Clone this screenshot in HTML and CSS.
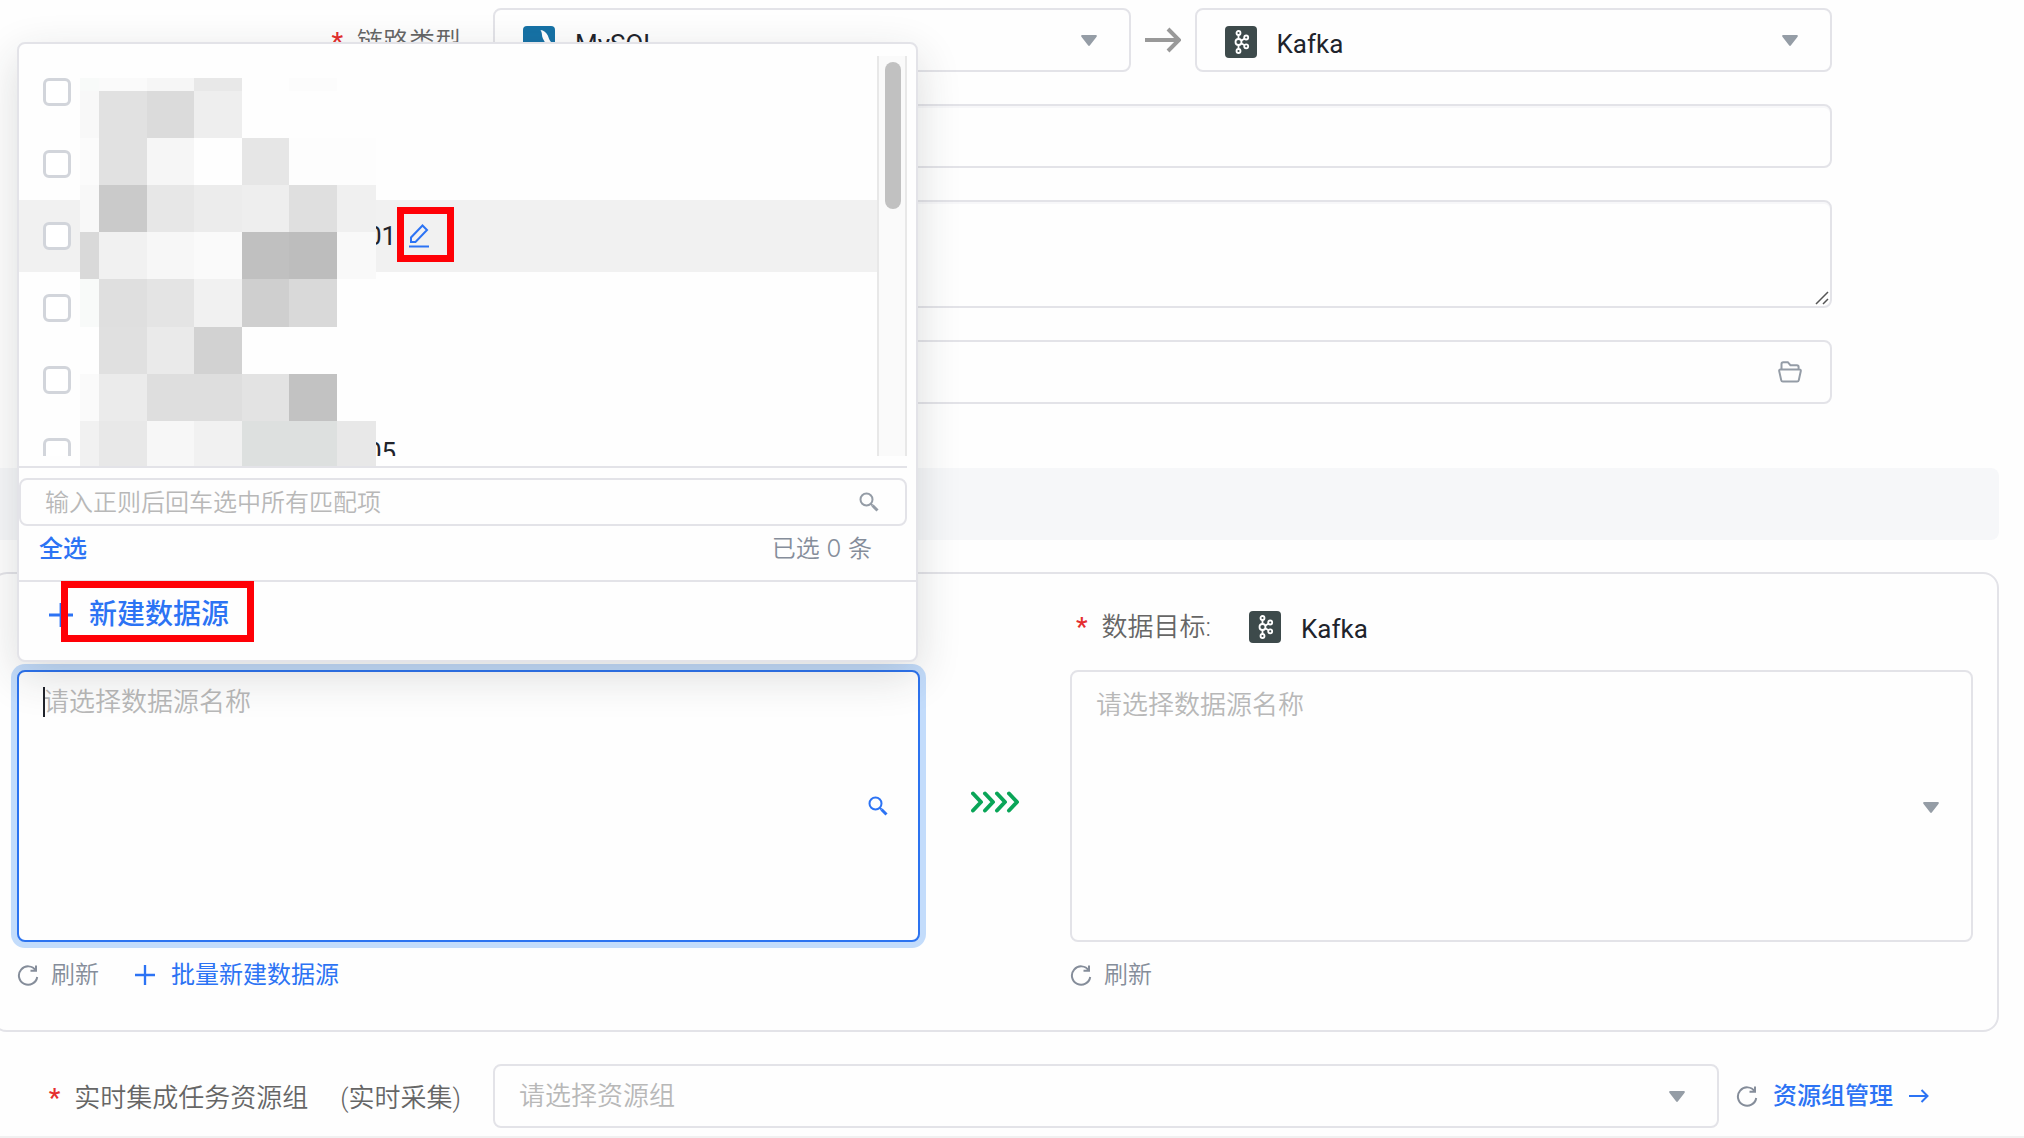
FILE: index.html
```html
<!DOCTYPE html>
<html lang="zh-CN">
<head>
<meta charset="utf-8">
<meta name="viewport" content="width=device-width, initial-scale=1">
<title>新建集成任务</title>
<link rel="stylesheet" href="styles.css">
</head>
<body>
<svg class="sprite" aria-hidden="true">
  <symbol id="caret" viewBox="0 0 16 11"><path d="M1.2 0h13.6c.9 0 1.4 1 .8 1.700L9 10.300a1.300 1.300 0 0 1-2 0L.4 1.700C-.2 1 .3 0 1.200 0z" fill="currentColor"/></symbol>
  <symbol id="kafka" viewBox="0 0 32 32">
    <rect width="32" height="32" rx="4" fill="#3d4a4b"/>
    <g fill="none" stroke="#fff" stroke-width="1.800">
      <path d="M13.500 9v4M13.500 19v4M16.500 14.500l2.800-1.800M16.500 17.500l2.800 1.500"/>
      <circle cx="13.500" cy="7" r="2"/><circle cx="13.500" cy="16" r="3"/><circle cx="13.500" cy="25" r="2"/>
      <circle cx="21.200" cy="11.500" r="2"/><circle cx="21.200" cy="20.300" r="2"/>
    </g>
  </symbol>
  <symbol id="mysql" viewBox="0 0 32 32">
    <rect width="32" height="32" rx="4" fill="#1672a6"/>
    <path d="M17.500 4c3 .3 6 2.500 7.300 5.500 1 2.400 1.500 4.500 3.200 6.500-1.500 0-3-.2-4 .5 1 2 2.500 3.500 3.500 6-3-1.500-4.500-4-6-7-1-2-2.500-4-2.500-6.500C18.800 7 18.500 5.500 17.500 4z" fill="#fff"/>
  </symbol>
  <symbol id="search" viewBox="0 0 20 20"><circle cx="7.500" cy="7.500" r="6" fill="none" stroke="currentColor" stroke-width="2"/><path d="M12 12l1.500 1.500" stroke="currentColor" stroke-width="2"/><path d="M13.500 13.500l5 5" stroke="currentColor" stroke-width="3"/></symbol>
  <symbol id="refresh" viewBox="0 0 22 22"><path d="M18.800 6.500A9.200 9.200 0 1 0 20.200 13M19 1.500v5.300h-5.500" fill="none" stroke="currentColor" stroke-width="2"/></symbol>
  <symbol id="plus" viewBox="0 0 24 24"><path d="M12 0v24M0 12h24" stroke="currentColor" stroke-width="2.800"/></symbol>
</svg>

<main class="page">
  <form class="form">
    <div class="row">
      <label class="label" for="src-type"><span class="star">*</span>链路类型</label>
      <div class="links">
        <div class="pick">
          <svg class="logo"><use href="#mysql"/></svg>
          <select id="src-type" class="pick-select"><option>MySQL</option></select>
          <svg class="caret"><use href="#caret"/></svg>
        </div>
        <svg class="flow" viewBox="0 0 36 26" aria-hidden="true"><path d="M0 13h33M23 2l11 11-11 11" fill="none" stroke="#999" stroke-width="4"/></svg>
        <div class="pick">
          <svg class="logo"><use href="#kafka"/></svg>
          <select class="pick-select" aria-label="目标类型"><option>Kafka</option></select>
          <svg class="caret"><use href="#caret"/></svg>
        </div>
      </div>
    </div>
    <div class="row"><span></span><input class="field" type="text" aria-label="名称"></div>
    <div class="row"><span></span>
      <div class="note">
        <textarea class="field field-note" aria-label="描述"></textarea>
        <svg class="grip" viewBox="0 0 14 14" aria-hidden="true"><path d="M1 13L13 1M8 13l5-5" stroke="#555" stroke-width="1.500"/></svg>
      </div>
    </div>
    <div class="row"><span></span>
      <div class="pick pick-folder">
        <input class="bare" type="text" aria-label="目录">
        <svg class="folder" viewBox="0 0 24 22" aria-hidden="true"><path d="M3.500 8.500V3a1.800 1.800 0 0 1 1.800-1.800h4.500l2.600 3h6.400A1.800 1.800 0 0 1 20.600 6v2.500M2.500 8.500h19a1.300 1.300 0 0 1 1.300 1.600l-2 9a1.800 1.800 0 0 1-1.800 1.500H5a1.800 1.800 0 0 1-1.800-1.500l-2-9a1.300 1.300 0 0 1 1.300-1.600z" fill="none" stroke="#949ca6" stroke-width="2"/></svg>
      </div>
    </div>
  </form>

  <div class="band"></div>

  <section class="card">
    <div class="side">
      <div class="side-head"></div>
      <div class="box">
        <textarea class="area area-focus" placeholder="请选择数据源名称" aria-label="数据来源"></textarea>
        <span class="cursor"></span>
        <svg class="box-search"><use href="#search"/></svg>

        <div class="panel">
          <div class="list-wrap">
            <ul class="list">
              <li class="item"><input class="check" type="checkbox" aria-label="数据源 1"></li>
              <li class="item"><input class="check" type="checkbox" aria-label="数据源 2"></li>
              <li class="item item-hover"><input class="check" type="checkbox" id="ds3"><label class="name" for="ds3">01</label>
                <button class="edit" type="button" aria-label="编辑"><svg class="pen" viewBox="0 0 20 24"><path d="M2 18v-4.500L13.500 1.500l4.500 4.500L6.500 18z" fill="none" stroke="currentColor" stroke-width="2"/><path d="M0 22.500h20" stroke="currentColor" stroke-width="2"/></svg></button></li>
              <li class="item"><input class="check" type="checkbox" aria-label="数据源 4"></li>
              <li class="item"><input class="check" type="checkbox" aria-label="数据源 5"></li>
              <li class="item"><input class="check" type="checkbox" id="ds6"><label class="name" for="ds6">05</label></li>
            </ul>
            <div class="track"><div class="thumb"></div></div>
          </div>
          <div class="finder">
            <input class="bare" type="text" placeholder="输入正则后回车选中所有匹配项" aria-label="搜索">
            <svg class="find-icon"><use href="#search"/></svg>
          </div>
          <div class="summary"><a class="link strong" href="#">全选</a><span class="count">已选 0 条</span></div>
          <div class="create"><a class="link create-link" href="#"><svg class="plus-lg"><use href="#plus"/></svg>新建数据源</a></div>

          <svg class="mosaic" viewBox="0 0 296 388" shape-rendering="crispEdges" aria-hidden="true">
            <path fill="#fefefe" d="M0 0h296v388H0z"/>
            <g><path fill="#f8faf9" d="M0 0h19v13H0z"/><path fill="#fafafa" d="M19 0h48v13H19z"/><path fill="#f6f6f6" d="M67 0h47v13H67z"/><path fill="#e8e8e8" d="M114 0h48v13h-48z"/><path fill="#fcfcfc" d="M209 0h48v13h-48z"/></g>
            <g><path fill="#f8f8f8" d="M0 13h19v47H0z"/><path fill="#e1e1e1" d="M19 13h48v94H19z"/><path fill="#dbdbdb" d="M67 13h47v47H67z"/><path fill="#eee" d="M114 13h48v47h-48z"/></g>
            <g><path fill="#fbfbfb" d="M0 60h19v47H0z"/><path fill="#f6f6f6" d="M67 60h47v47H67z"/><path fill="#e6e6e6" d="M162 60h47v47h-47z"/><path fill="#fdfdfd" d="M209 60h87v47h-87z"/></g>
            <g><path fill="#f8f8f8" d="M0 107h19v47H0z"/><path fill="#cacaca" d="M19 107h48v47H19z"/><path fill="#e7e7e7" d="M67 107h47v47H67z"/><path fill="#ececec" d="M114 107h48v47h-48z"/><path fill="#eee" d="M162 107h47v47h-47z"/><path fill="#dfdfdf" d="M209 107h48v47h-48z"/><path fill="#f0f0f0" d="M257 107h39v47h-39z"/></g>
            <g><path fill="#d9d9d9" d="M0 154h19v47H0z"/><path fill="#f1f1f1" d="M19 154h48v47H19z"/><path fill="#f7f7f7" d="M67 154h47v47H67z"/><path fill="#fafafa" d="M114 154h48v47h-48z"/><path fill="#c0c0c0" d="M162 154h47v47h-47z"/><path fill="#bdbdbd" d="M209 154h48v47h-48z"/><path fill="#f9f9f9" d="M257 154h39v47h-39z"/></g>
            <g><path fill="#f8faf9" d="M0 201h19v48H0z"/><path fill="#dfdfdf" d="M19 201h48v48H19z"/><path fill="#e4e4e4" d="M67 201h47v48H67z"/><path fill="#f1f1f1" d="M114 201h48v48h-48z"/><path fill="#cfcfcf" d="M162 201h47v48h-47z"/><path fill="#d9d9d9" d="M209 201h48v48h-48z"/></g>
            <g><path fill="#e0e0e0" d="M19 249h48v47H19z"/><path fill="#eaeaea" d="M67 249h47v47H67z"/><path fill="#d2d2d2" d="M114 249h48v47h-48z"/></g>
            <g><path fill="#fafafa" d="M0 296h19v47H0z"/><path fill="#ebebeb" d="M19 296h48v47H19z"/><path fill="#dedede" d="M67 296h95v47H67z"/><path fill="#e3e3e3" d="M162 296h47v47h-47z"/><path fill="#c2c2c2" d="M209 296h48v47h-48z"/></g>
            <g><path fill="#f1f1f1" d="M0 343h19v45H0z"/><path fill="#e8e8e8" d="M19 343h48v45H19z"/><path fill="#f7f7f7" d="M67 343h47v45H67z"/><path fill="#f1f1f1" d="M114 343h48v45h-48z"/><path fill="#dde0df" d="M162 343h95v45h-95z"/><path fill="#e8e8e8" d="M257 343h39v45h-39z"/></g>
          </svg>
          <span class="mark mark-edit"></span>
          <span class="mark mark-create"></span>
        </div>
      </div>
      <div class="actions">
        <button class="refresh" type="button"><svg class="refresh-icon"><use href="#refresh"/></svg>刷新</button>
        <a class="link batch" href="#"><svg class="plus-sm"><use href="#plus"/></svg>批量新建数据源</a>
      </div>
    </div>

    <svg class="chevrons" viewBox="0 0 48 22" aria-hidden="true"><path d="M2 2.500L10 11l-8 8.500M14 2.500l8 8.500-8 8.500M26 2.500l8 8.500-8 8.500M38 2.500l8 8.500-8 8.500" fill="none" stroke="#0aa558" stroke-width="4" stroke-linecap="round" stroke-linejoin="round"/></svg>

    <div class="side">
      <div class="side-head">
        <label class="side-label" for="target"><span class="star">*</span>数据目标:</label>
        <svg class="logo"><use href="#kafka"/></svg>
        <span class="kind">Kafka</span>
      </div>
      <div class="box">
        <textarea class="area" id="target" placeholder="请选择数据源名称"></textarea>
        <svg class="box-caret"><use href="#caret"/></svg>
      </div>
      <div class="actions">
        <button class="refresh" type="button"><svg class="refresh-icon"><use href="#refresh"/></svg>刷新</button>
      </div>
    </div>
  </section>

  <div class="group">
    <label class="label" for="group"><span class="star">*</span><span>实时集成任务资源组</span><span class="hint">(实时采集)</span></label>
    <div class="pick pick-group">
      <select class="pick-select pick-empty" id="group"><option>请选择资源组</option></select>
      <svg class="caret"><use href="#caret"/></svg>
    </div>
    <div class="group-links">
      <button class="refresh" type="button" aria-label="刷新资源组"><svg class="refresh-icon"><use href="#refresh"/></svg></button>
      <a class="link strong manage" href="#">资源组管理<svg class="go" viewBox="0 0 20 14"><path d="M0 7h18.500M12.500 1l6 6-6 6" fill="none" stroke="currentColor" stroke-width="2"/></svg></a>
    </div>
  </div>
</main>
</body>
</html>
```

FILE: styles.css
```css
* { box-sizing: border-box; }

body {
  margin: 0;
  background: #fefefe;
  color: #20232b;
  font: 26px/40px Roboto, "Noto Sans CJK SC", sans-serif;
}

input, select, textarea, button { font: inherit; color: inherit; }
svg { display: block; flex: none; }
.sprite { position: absolute; width: 0; height: 0; }

.page {
  overflow: hidden;
  border-bottom: 2px solid #f1f1f1;
  padding: 8px 0;
}

/* upper form */
.form {
  display: grid;
  gap: 32px;
  padding-right: 192px;
}
.row {
  display: grid;
  grid-template-columns: 493px 1fr;
}
.label {
  display: flex;
  align-items: center;
  justify-content: flex-end;
  height: 64px;
  padding: 3px 32px 0 0;
  color: #666;
  font-weight: 350;
  white-space: nowrap;
}
.star {
  margin-right: 14px;
  color: #e52e2e;
  font-weight: 500;
}
.links {
  display: grid;
  grid-template-columns: 1fr 64px 1fr;
  align-items: center;
  justify-items: center;
}
.pick {
  display: flex;
  align-items: center;
  position: relative;
  width: 100%;
  height: 64px;
  padding-left: 28px;
  border: 2px solid #e3e3e8;
  border-radius: 8px;
  background: #fefefe;
}
.logo { width: 32px; height: 32px; }
.pick .logo { margin-bottom: -4px; }
.pick-select {
  flex: 1;
  min-width: 0;
  height: 60px;
  padding: 8px 0 0 20px;
  border: 0;
  background: transparent;
  appearance: none;
  outline: 0;
}
.caret {
  position: absolute;
  right: 32px;
  width: 16px;
  height: 11px;
  color: #959da6;
  pointer-events: none;
}
.flow { width: 36px; height: 26px; }
.field {
  width: 100%;
  height: 64px;
  padding: 0 24px;
  border: 2px solid #e3e3e8;
  border-radius: 8px;
  background: #fefefe;
  box-shadow: inset 0 2px 0 #f7f7f9;
  outline: 0;
}
.note { position: relative; }
.field-note { display: block; height: 108px; resize: vertical; }
.field-note::-webkit-resizer { background: transparent; }
.grip {
  position: absolute;
  right: 3px;
  bottom: 3px;
  width: 14px;
  height: 14px;
  pointer-events: none;
}
.bare {
  flex: 1;
  min-width: 0;
  height: 100%;
  padding: 2px 0 0;
  border: 0;
  background: transparent;
  outline: 0;
}
.folder { width: 24px; height: 22px; margin-right: 28px; }

.band {
  height: 72px;
  margin: 64px 25px 32px 0;
  background: #f6f7f9;
  border-radius: 0 8px 8px 0;
}

/* source and target */
.card {
  display: grid;
  grid-template-columns: 1fr 150px 1fr;
  margin: 0 25px 32px -9px;
  padding: 0 24px 39px;
  border: 2px solid #e3e3e8;
  border-radius: 16px;
}
.side-head {
  display: flex;
  align-items: center;
  height: 96px;
  padding: 10px 0 0 6px;
}
.side-label {
  margin-right: 38px;
  color: #666;
  font-weight: 350;
}
.kind { margin-left: 20px; padding-top: 4px; }
.box { position: relative; }
.area {
  display: block;
  width: 100%;
  height: 272px;
  padding: 13px 24px;
  border: 2px solid #e3e3e8;
  border-radius: 8px;
  background: #fefefe;
  resize: none;
  outline: 0;
}
.area-focus {
  border-color: #2c73f0;
  padding-top: 10px;
  box-shadow: 0 0 0 6px #c3dcfb;
}
::placeholder { color: #b8b8b8; font-weight: 350; opacity: 1; }
.cursor {
  position: absolute;
  top: 17px;
  left: 26px;
  width: 2px;
  height: 30px;
  background: #20232b;
}
.box-search, .box-caret { position: absolute; }
.box-search { top: 126px; right: 32px; width: 20px; height: 20px; color: #2c73f4; }
.box-caret { top: 132px; right: 34px; width: 16px; height: 11px; color: #959da6; }
.chevrons { width: 48px; height: 22px; margin: 217px auto 0; }

.actions {
  display: flex;
  align-items: center;
  gap: 36px;
  height: 32px;
  margin-top: 17px;
  font-size: 24px;
}
.refresh {
  display: flex;
  align-items: center;
  gap: 12px;
  padding: 0;
  border: 0;
  background: none;
  color: #858d9a;
  font-weight: 350;
  line-height: 32px;
}
.refresh-icon { width: 22px; height: 22px; }
.link {
  display: flex;
  align-items: center;
  color: #2c73f4;
  text-decoration: none;
}
.strong { font-weight: 500; }
.batch { gap: 16px; }
.plus-sm { width: 20px; height: 20px; }

/* drop-down list of sources */
.panel {
  position: absolute;
  right: 2px;
  bottom: 280px;
  left: 0;
  z-index: 2;
  padding-top: 12px;
  border: 2px solid #e3e3e8;
  border-radius: 8px;
  background: #fefefe;
  box-shadow: 0 14px 44px rgba(35, 45, 45, .16);
  font-size: 24px;
}
.list-wrap {
  display: flex;
  margin-right: 9px;
  padding-bottom: 10px;
  border-bottom: 2px solid #e3e3e8;
}
.list {
  flex: 1;
  height: 400px;
  margin: 0;
  padding: 0;
  overflow: hidden;
  list-style: none;
}
.item {
  display: flex;
  align-items: center;
  height: 72px;
  padding-left: 24px;
}
.item-hover { background: #f1f1f1; }
.check {
  width: 28px;
  height: 28px;
  margin: 0;
  border: 3px solid #d2d5db;
  border-radius: 6px;
  background: #fff;
  appearance: none;
}
.name { margin-left: 296px; font-size: 26px; }
.edit {
  margin-left: 13px;
  padding: 0;
  border: 0;
  background: none;
  color: #2c73f4;
}
.pen { width: 20px; height: 24px; }
.track {
  width: 30px;
  padding: 6px;
  border: solid #e8e8e8;
  border-width: 0 2px;
  background: #fafafa;
}
.thumb {
  width: 16px;
  height: 147px;
  border-radius: 8px;
  background: #c1c1c1;
}
.finder {
  display: flex;
  align-items: center;
  height: 48px;
  margin: 10px 9px 0 0;
  padding: 0 26px 0 24px;
  border: 2px solid #e3e3e8;
  border-radius: 8px;
}
.find-icon { width: 20px; height: 20px; color: #949ca6; }
.summary {
  display: flex;
  align-items: flex-start;
  justify-content: space-between;
  height: 56px;
  padding: 3px 44px 0 20px;
  border-bottom: 2px solid #e3e3e8;
  color: #858d9a;
}
.count { font-family: Inter, "Noto Sans CJK SC", sans-serif; font-weight: 350; }
.create {
  height: 78px;
  padding: 13px 30px;
  font-size: 28px;
}
.create-link { display: inline-flex; gap: 16px; font-weight: 500; }
.plus-lg { width: 24px; height: 24px; }
.mosaic {
  position: absolute;
  top: 34px;
  left: 61px;
  width: 296px;
  height: 388px;
}
.mark { position: absolute; border: 7px solid #ff0006; pointer-events: none; }
.mark-edit { top: 163px; left: 378px; width: 57px; height: 55px; }
.mark-create { top: 537px; left: 42px; width: 193px; height: 61px; }

/* resource group */
.group {
  display: grid;
  grid-template-columns: 493px 1fr 305px;
}
.hint { margin-left: 32px; }
.pick-group { padding-left: 24px; }
.pick-empty { padding: 0; color: #b8b8b8; font-weight: 350; }
.group-links {
  display: flex;
  align-items: center;
  gap: 15px;
  padding-left: 17px;
  font-size: 24px;
}
.manage { gap: 16px; white-space: nowrap; }
.go { width: 20px; height: 14px; }
```
